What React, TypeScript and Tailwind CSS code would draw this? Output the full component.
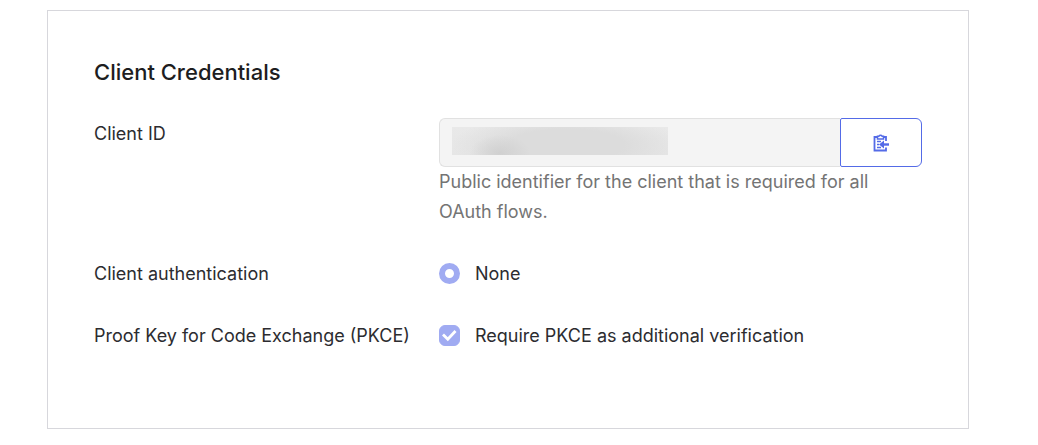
import { useState } from "react";

function ClipboardCopyIcon() {
    return (
        <svg width="16" height="20" viewBox="0 0 16 20" fill="none" stroke="currentColor" aria-hidden="true">
            <path d="M4 4H1.5v13.5H13v-3M11 4h2v4" strokeWidth="1.8" />
            <path d="M4.5 6V3.2h1.4a1.8 1.8 0 0 1 3.2 0h1.4V6z" strokeWidth="1.5" />
            <path d="M4 8.5h4M4 11.5h2M4 14.5h4" strokeWidth="1.5" />
            <path d="M16 11.5H9" strokeWidth="2.4" />
            <path d="M6 11.5 11 7.5v8z" fill="currentColor" stroke="none" />
        </svg>
    );
}

export default function App() {
    const [pkce, setPkce] = useState(true);
    const [clientId] = useState("");

    const handleCopy = () => {
        navigator.clipboard?.writeText(clientId);
    };

    return (
        <main className="bg-white pt-[10px] pr-[69px] pb-4 pl-[47px] font-['Inter',sans-serif] text-lg font-normal text-[#1d1d21]">
            <section className="border border-[#d7d7dc] px-[46px] pt-[46px] pb-[77px]">
                <h2 className="text-[22px] leading-[30px] font-medium">Client Credentials</h2>

                <div className="mt-[31px] grid grid-cols-[345px_1fr] gap-y-[31px] leading-[31px] text-[#2c2c30]">
                    {/* Client ID */}
                    <label htmlFor="client-id">Client ID</label>
                    <div>
                        <div className="relative flex h-[49px]">
                            <input
                                id="client-id"
                                type="text"
                                readOnly
                                value={clientId}
                                aria-describedby="client-id-hint"
                                className="min-w-0 flex-1 rounded-l-md border border-r-0 border-[#e1e1e1] bg-[#f4f4f4] px-3 outline-none"
                            />
                            {/* Redacted value */}
                            <div className="pointer-events-none absolute top-[9px] left-[13px] h-7 w-[216px] bg-[radial-gradient(ellipse_30px_18px_at_48px_26px,#d0d0d0,transparent),radial-gradient(ellipse_115px_32px_at_115px_18px,#dcdcdc_50%,transparent),linear-gradient(#e9e9e9,#e6e6e6)]" />
                            <button
                                type="button"
                                onClick={handleCopy}
                                aria-label="Copy to clipboard"
                                className="flex w-[82px] items-center justify-center rounded-r-md rounded-l-xs border border-[#546be7] bg-white text-[#546be7]"
                            >
                                <ClipboardCopyIcon />
                            </button>
                        </div>
                        <p id="client-id-hint" className="max-w-[460px] leading-[30px] text-[#747474]">
                            Public identifier for the client that is required for all OAuth flows.
                        </p>
                    </div>

                    {/* Client authentication */}
                    <span id="auth-label">Client authentication</span>
                    <label className="flex items-center gap-[15px]">
                        <input
                            type="radio"
                            name="client-auth"
                            defaultChecked
                            aria-describedby="auth-label"
                            className="size-[21px] appearance-none rounded-full border-6 border-[#a0abf2] bg-white"
                        />
                        None
                    </label>

                    {/* PKCE */}
                    <span id="pkce-label">Proof Key for Code Exchange (PKCE)</span>
                    <label className="flex items-center gap-[15px]">
                        <span className="relative flex">
                            <input
                                type="checkbox"
                                checked={pkce}
                                onChange={(e) => setPkce(e.target.checked)}
                                aria-describedby="pkce-label"
                                className="size-[21px] appearance-none rounded-md border border-[#a0abf2] checked:bg-[#a0abf2]"
                            />
                            {pkce && (
                                <svg viewBox="0 0 21 21" className="pointer-events-none absolute inset-0 size-[21px]" aria-hidden="true">
                                    <path d="m4 9.5 4.8 4.8L16.5 6" fill="none" stroke="white" strokeWidth="2.8" />
                                </svg>
                            )}
                        </span>
                        Require PKCE as additional verification
                    </label>
                </div>
            </section>
        </main>
    );
}
